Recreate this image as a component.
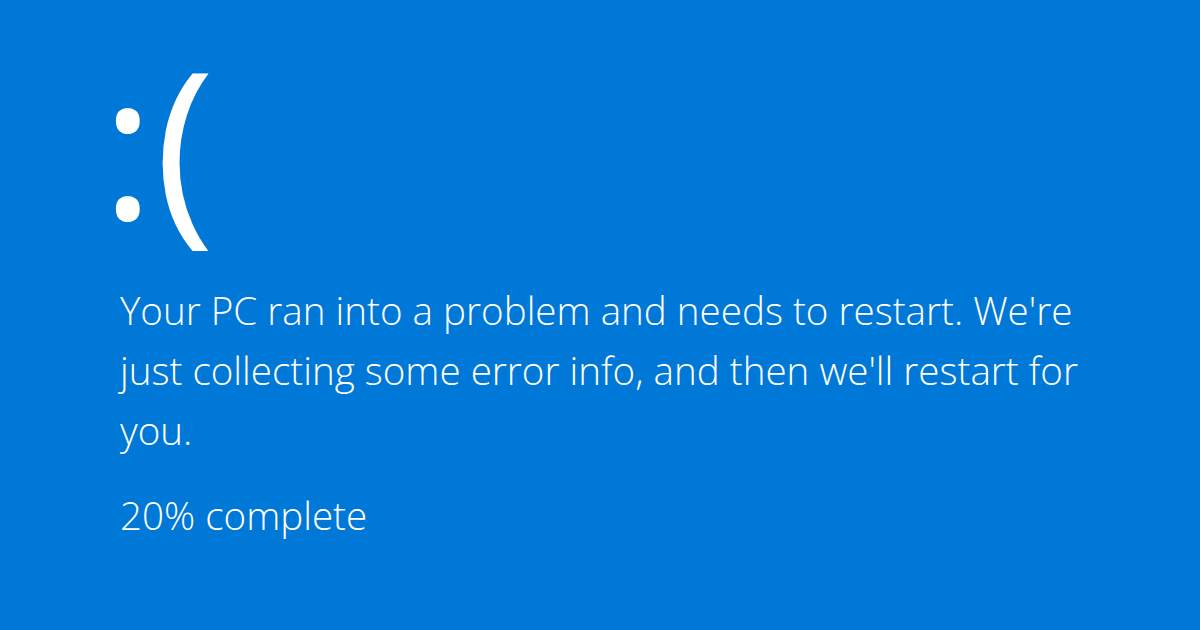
export default function App() {
  return (
    <div
      className="w-[1200px] h-[630px] bg-[#0078d7] text-white overflow-hidden pl-[120px] pt-[20px]"
      style={{ fontFamily: '"Open Sans", "Noto Sans", sans-serif' }}
    >
      <div className="ml-[-19px] text-[204px] font-normal leading-[240px] h-[240px]">:(</div>
      <p className="mt-[20px] text-[38.6px] font-light leading-[60px] w-[990px]">
        Your PC ran into a problem and needs to restart. We're just collecting
        some error info, and then we'll restart for you.
      </p>
      <p className="mt-[25px] text-[38.6px] font-light leading-[60px]">20% complete</p>
    </div>
  );
}
